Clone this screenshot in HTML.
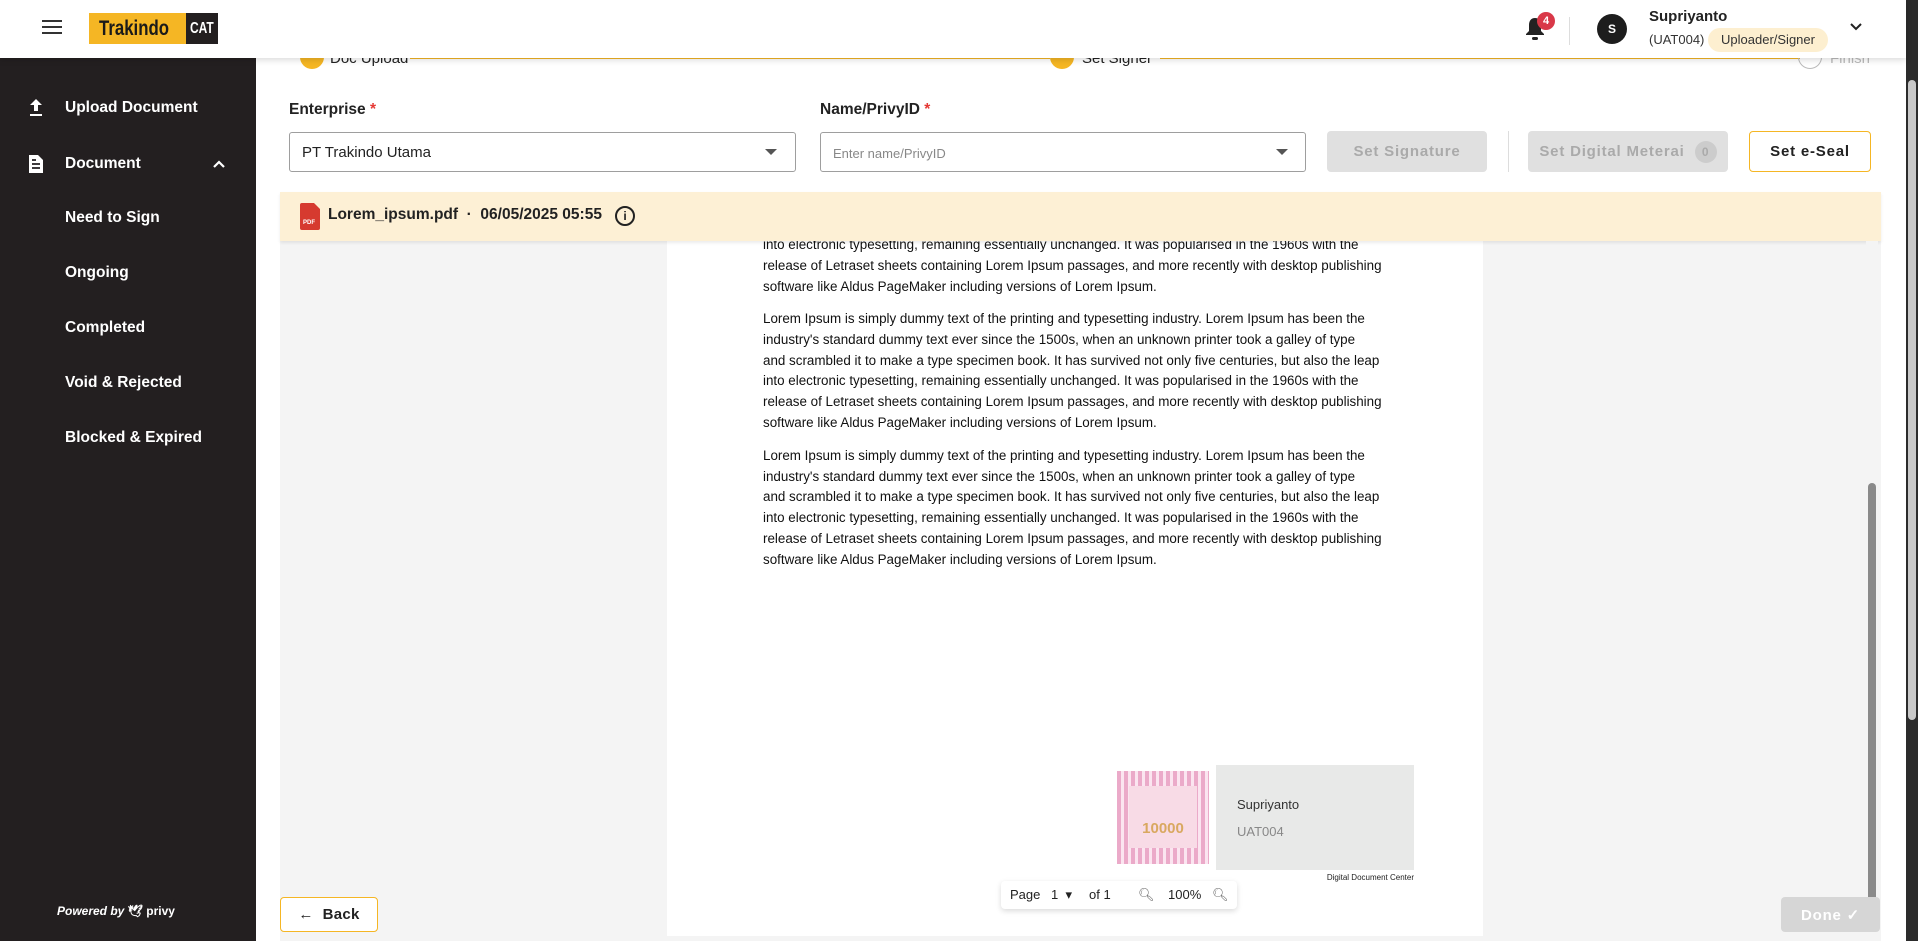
<!DOCTYPE html>
<html><head><meta charset="utf-8"><style>
*{box-sizing:border-box;margin:0;padding:0}
body{width:1918px;height:941px;overflow:hidden;font-family:"Liberation Sans",sans-serif;background:#fff;position:relative;color:#222}
.abs{position:absolute}
#hdr{left:0;top:0;width:1906px;height:58px;background:#fff;box-shadow:0 2px 6px rgba(0,0,0,.15);z-index:5}
#side{left:0;top:58px;width:256px;height:883px;background:#231f20;color:#fff}
.nav{position:absolute;left:65px;font-size:15.5px;font-weight:bold}
.lbl{font-size:15.5px;font-weight:bold;color:#222}
.lbl b{color:#e53935}
.inp{border:1px solid #9e9e9e;border-radius:3px;height:40px;font-size:15px;padding:11px 12px}
.btn{border-radius:4px;height:41px;font-size:15px;font-weight:bold;letter-spacing:.8px;display:flex;align-items:center;justify-content:center}
.doc p{font-size:13.4px;line-height:20.8px;margin-bottom:0;color:#111}
</style></head><body>
<div id="hdr" class="abs">
 <div class="abs" style="left:42px;top:20px;width:20px;height:2px;background:#333;box-shadow:0 6px 0 #333,0 12px 0 #333"></div>
 <div class="abs" style="left:89px;top:13px;width:129px;height:31px;background:#f5b624;"></div>
 <div class="abs" style="left:99px;top:17px;font-size:21px;font-weight:bold;color:#1a1a1a;transform:scaleX(.8);transform-origin:left">Trakindo</div>
 <div class="abs" style="left:186px;top:13px;width:32px;height:31px;background:#231f20;color:#fff;font-weight:bold;font-size:16px;text-align:center;line-height:31px;overflow:hidden"><span style="display:inline-block;transform:scaleX(.75)">CAT</span></div>
 <svg class="abs" style="left:1524px;top:16px" width="22" height="26" viewBox="0 0 22 26"><path d="M11 2c-4 0-6 3-6 7v6l-3 3v1h18v-1l-3-3V9c0-4-2-7-6-7z" fill="#222"/><rect x="8" y="21" width="6" height="3" rx="1.5" fill="#222"/></svg>
 <div class="abs" style="left:1537px;top:12px;width:18px;height:18px;border-radius:50%;background:#d93848;color:#fff;font-size:11px;font-weight:bold;text-align:center;line-height:18px">4</div>
 <div class="abs" style="left:1569px;top:17px;width:1px;height:28px;background:#ddd"></div>
 <div class="abs" style="left:1597px;top:14px;width:30px;height:30px;border-radius:50%;background:#1d1d1d;color:#fff;font-size:12px;font-weight:bold;text-align:center;line-height:30px">S</div>
 <div class="abs" style="left:1649px;top:8px;font-size:15px;font-weight:bold">Supriyanto</div>
 <div class="abs" style="left:1649px;top:32px;font-size:13px;color:#333">(UAT004)</div>
 <div class="abs" style="left:1708px;top:28px;width:120px;height:24px;border-radius:12px;background:#fdefd0;font-size:13px;text-align:center;line-height:24px;color:#333">Uploader/Signer</div>
 <svg class="abs" style="left:1849px;top:22px" width="14" height="10"><path d="M2 2l5 5 5-5" stroke="#222" stroke-width="2" fill="none"/></svg>
</div>
<div id="side" class="abs">
 <svg class="abs" style="left:28px;top:40px" width="16" height="20"><path d="M8 1l-6 6h4v6h4V7h4z M2 16h12v2H2z" fill="#fff"/></svg>
 <div class="nav" style="top:41px">Upload Document</div>
 <svg class="abs" style="left:28px;top:96px" width="16" height="20"><path d="M1 1h9l5 5v13H1z" fill="#fff"/><path d="M4 10h8M4 14h8M4 6h4" stroke="#231f20" stroke-width="1.8"/></svg>
 <div class="nav" style="top:97px">Document</div>
 <svg class="abs" style="left:212px;top:101px" width="14" height="10"><path d="M2 8l5-5 5 5" stroke="#fff" stroke-width="2.2" fill="none"/></svg>
 <div class="nav" style="top:151px">Need to Sign</div>
 <div class="nav" style="top:206px">Ongoing</div>
 <div class="nav" style="top:261px">Completed</div>
 <div class="nav" style="top:316px">Void &amp; Rejected</div>
 <div class="nav" style="top:371px">Blocked &amp; Expired</div>
 <div class="abs" style="left:57px;top:846px;font-size:12px;font-style:italic;font-weight:bold">Powered by <span style="font-style:normal">🕊 privy</span></div>
</div>
<!-- stepper -->
<div class="abs" style="left:300px;top:45px;width:24px;height:24px;border-radius:50%;background:#f5b624"></div>
<div class="abs" style="left:330px;top:50px;font-size:15px">Doc Upload</div>
<div class="abs" style="left:410px;top:58px;width:640px;height:1px;background:#f5b624"></div>
<div class="abs" style="left:1050px;top:45px;width:24px;height:24px;border-radius:50%;background:#f5b624"></div>
<div class="abs" style="left:1082px;top:50px;font-size:15px">Set Signer</div>
<div class="abs" style="left:1160px;top:58px;width:640px;height:1px;background:#f5b624"></div>
<div class="abs" style="left:1798px;top:45px;width:24px;height:24px;border-radius:50%;border:1px solid #bbb"></div>
<div class="abs" style="left:1830px;top:50px;font-size:15px;color:#bbb">Finish</div>
<!-- form -->
<div class="abs lbl" style="left:289px;top:101px">Enterprise <b>*</b></div>
<div class="abs inp" style="left:289px;top:132px;width:507px">PT Trakindo Utama</div>
<svg class="abs" style="left:765px;top:149px" width="12" height="6"><path d="M0 0h12L6 6z" fill="#555"/></svg>
<div class="abs lbl" style="left:820px;top:101px">Name/PrivyID <b>*</b></div>
<div class="abs inp" style="left:820px;top:132px;width:486px;font-size:13px;color:#888;padding-top:13px">Enter name/PrivyID</div>
<svg class="abs" style="left:1276px;top:149px" width="12" height="6"><path d="M0 0h12L6 6z" fill="#555"/></svg>
<div class="abs btn" style="left:1327px;top:131px;width:160px;background:#e0e0e0;color:#aaa">Set Signature</div>
<div class="abs" style="left:1508px;top:131px;width:1px;height:41px;background:#ddd"></div>
<div class="abs btn" style="left:1528px;top:131px;width:200px;background:#e0e0e0;color:#aaa">Set Digital Meterai <span style="margin-left:10px;width:22px;height:22px;border-radius:50%;background:#ccc;display:inline-block;text-align:center;line-height:22px;font-size:12px">0</span></div>
<div class="abs btn" style="left:1749px;top:131px;width:122px;border:1px solid #f5b624;color:#222">Set e-Seal</div>
<!-- viewer -->
<div class="abs" style="left:280px;top:241px;width:1601px;height:700px;background:#f4f4f4"></div>
<div class="abs doc" style="left:667px;top:241px;width:816px;height:695px;background:#fff;overflow:hidden">
 <div style="position:absolute;left:96px;top:-6px;width:640px">
 <p>into electronic typesetting, remaining essentially unchanged. It was popularised in the 1960s with the<br>release of Letraset sheets containing Lorem Ipsum passages, and more recently with desktop publishing<br>software like Aldus PageMaker including versions of Lorem Ipsum.</p>
 </div>
 <div style="position:absolute;left:96px;top:68px;width:640px">
 <p>Lorem Ipsum is simply dummy text of the printing and typesetting industry. Lorem Ipsum has been the<br>industry's standard dummy text ever since the 1500s, when an unknown printer took a galley of type<br>and scrambled it to make a type specimen book. It has survived not only five centuries, but also the leap<br>into electronic typesetting, remaining essentially unchanged. It was popularised in the 1960s with the<br>release of Letraset sheets containing Lorem Ipsum passages, and more recently with desktop publishing<br>software like Aldus PageMaker including versions of Lorem Ipsum.</p>
 <p style="margin-top:12px">Lorem Ipsum is simply dummy text of the printing and typesetting industry. Lorem Ipsum has been the<br>industry's standard dummy text ever since the 1500s, when an unknown printer took a galley of type<br>and scrambled it to make a type specimen book. It has survived not only five centuries, but also the leap<br>into electronic typesetting, remaining essentially unchanged. It was popularised in the 1960s with the<br>release of Letraset sheets containing Lorem Ipsum passages, and more recently with desktop publishing<br>software like Aldus PageMaker including versions of Lorem Ipsum.</p>
 </div>
 <div style="position:absolute;left:450px;top:530px;width:92px;height:93px;background:repeating-linear-gradient(90deg,#e9a1c4 0 4px,#fbe3ef 4px 7px),#e9a1c4;opacity:.9"></div>
 <div style="position:absolute;left:462px;top:545px;width:68px;height:62px;background:#f8dbe6;text-align:center;font-size:15px;color:#d9a860;padding-top:34px;font-weight:bold">10000</div>
 <div style="position:absolute;left:549px;top:524px;width:198px;height:105px;background:#e8e9e8"></div>
 <div style="position:absolute;left:570px;top:556px;font-size:13px;color:#333">Supriyanto</div>
 <div style="position:absolute;left:570px;top:583px;font-size:13px;color:#888">UAT004</div>
 <div style="position:absolute;left:647px;top:632px;font-size:8px;color:#222;width:100px;text-align:right">Digital Document Center</div>
 <div style="position:absolute;left:334px;top:640px;width:236px;height:28px;background:#fff;box-shadow:0 2px 6px rgba(0,0,0,.15);border-radius:4px;font-size:13px;line-height:28px;color:#222">
  <span style="position:absolute;left:9px">Page</span><span style="position:absolute;left:50px">1 &nbsp;▾</span><span style="position:absolute;left:88px">of 1</span>
  <span style="position:absolute;left:137px;color:#666">🔍︎</span><span style="position:absolute;left:167px">100%</span><span style="position:absolute;left:211px;color:#666">🔍︎</span></div>
</div>
<div class="abs" style="left:280px;top:192px;width:1601px;height:49px;background:#fdf0d5;box-shadow:0 2px 3px rgba(0,0,0,.08)"></div>
<svg class="abs" style="left:300px;top:203px" width="20" height="27"><path d="M0 2a2 2 0 0 1 2-2h12l6 6v19a2 2 0 0 1-2 2H2a2 2 0 0 1-2-2z" fill="#d63a2f"/><text x="3" y="21" font-size="6" fill="#fff" font-family="Liberation Sans" font-weight="bold">PDF</text></svg>
<div class="abs" style="left:328px;top:206px;font-size:15.5px;font-weight:bold;color:#222">Lorem_ipsum.pdf &nbsp;·&nbsp; 06/05/2025 05:55</div>
<div class="abs" style="left:615px;top:206px;width:20px;height:20px;border:2px solid #222;border-radius:50%;font-size:12px;font-weight:bold;text-align:center;line-height:16px">i</div>
<div class="abs" style="left:1866px;top:241px;width:12px;height:695px;background:#f4f4f4"></div>
<div class="abs" style="left:1868px;top:483px;width:8px;height:440px;background:#8a8a8a;border-radius:4px"></div>
<div class="abs" style="left:1906px;top:0;width:12px;height:941px;background:#2b2b2b"></div>
<div class="abs" style="left:1908px;top:80px;width:8px;height:640px;background:#c8c8c8;border-radius:4px"></div>
<div class="abs btn" style="left:280px;top:897px;width:98px;height:35px;border:1px solid #f5b624;background:#fff;color:#222;letter-spacing:.3px">← &nbsp;Back</div>
<div class="abs btn" style="left:1781px;top:897px;width:99px;height:35px;background:#d6d6d6;color:#fff">Done ✓</div>
</body></html>
